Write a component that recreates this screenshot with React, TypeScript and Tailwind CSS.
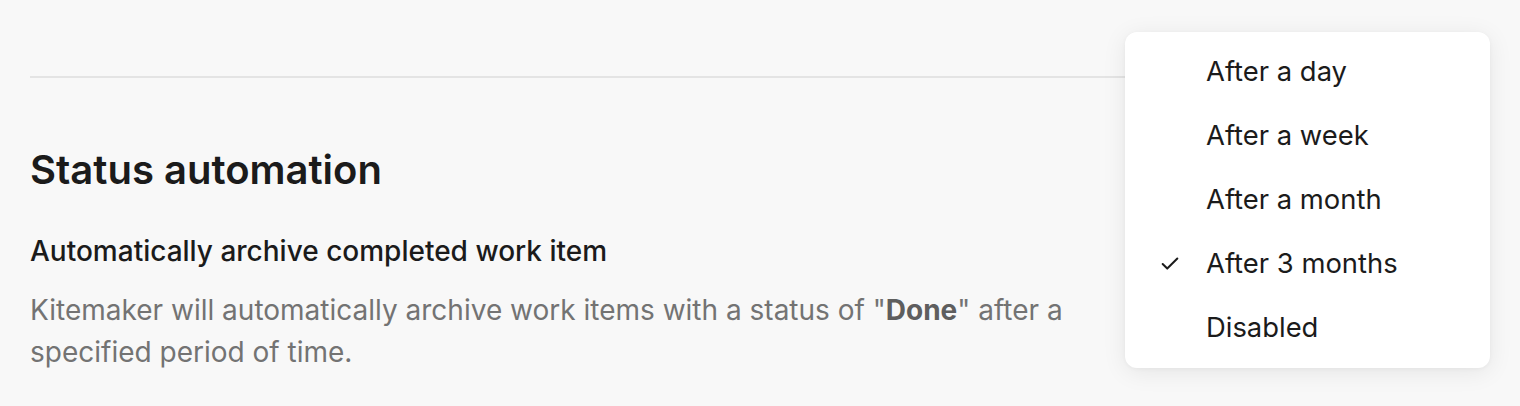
import { Check } from "lucide-react";

const options = ["After a day", "After a week", "After a month", "After 3 months", "Disabled"];

export default function App() {
  const selected = "After 3 months";

  return (
    <div
      className="relative w-[1520px] h-[406px] overflow-hidden bg-[#f8f8f8] px-[30px] pt-[76px]"
      style={{ fontFamily: "Inter, 'Noto Sans', sans-serif" }}
    >
      {/* Divider */}
      <div className="h-[2px] w-full bg-[#e4e4e4]"></div>

      {/* Section */}
      <div className="flex flex-col">
        <h2 className="mt-[68px] text-[40px] leading-[48px] font-semibold text-[#1b1b1b]">
          Status automation
        </h2>
        <span className="mt-[39px] text-[28px] leading-[36px] font-medium text-[#1b1b1b]">
          Automatically archive completed work item
        </span>
        <p className="mt-[20px] w-[1060px] text-[28px] leading-[42px] text-[#737373]">
          Kitemaker will automatically archive work items with a status of "
          <span className="font-bold text-[#5e5e5e]">Done</span>" after a specified period of time.
        </p>
      </div>

      {/* Dropdown menu */}
      <div className="absolute left-[1125px] top-[32px] w-[365px] rounded-[12px] bg-white py-2 shadow-[0_4px_24px_rgba(0,0,0,0.08),0_1px_4px_rgba(0,0,0,0.04)]">
        {options.map((option) => (
          <div key={option} className="flex h-16 items-center text-[27.4px] text-[#1b1b1b]">
            <div className="flex w-[81px] justify-center pl-[8px]">
              {option === selected && <Check size={22} strokeWidth={2.2} />}
            </div>
            <span>{option}</span>
          </div>
        ))}
      </div>
    </div>
  );
}
